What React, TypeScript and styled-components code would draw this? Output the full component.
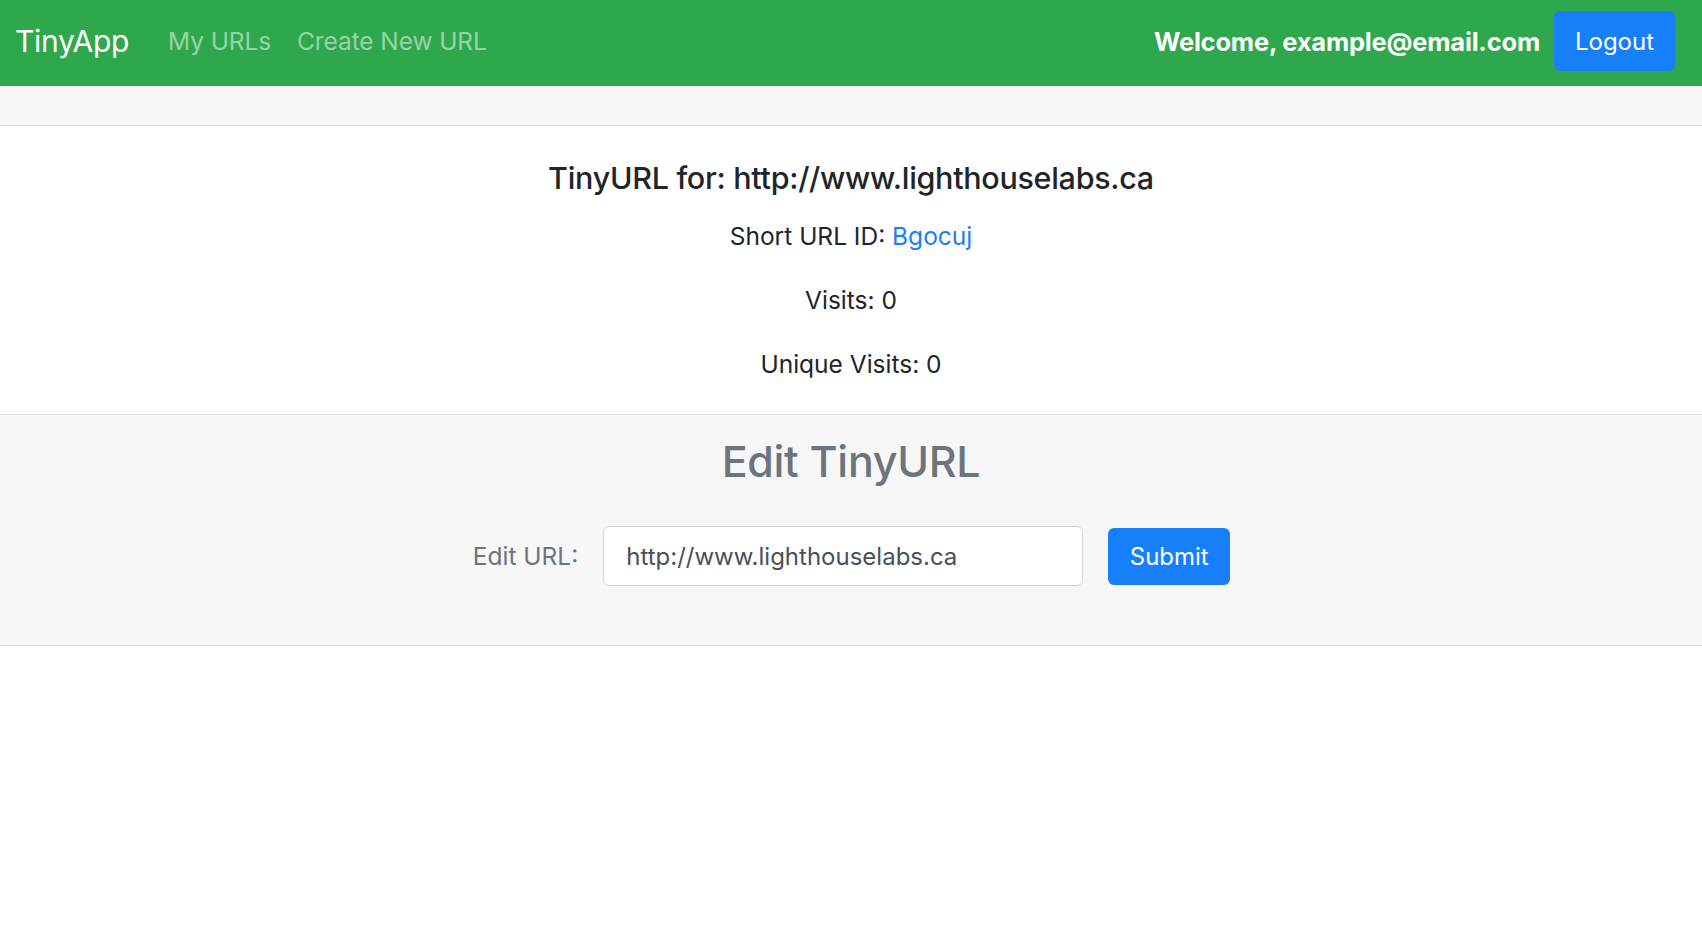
import React from "react";
import styled, { createGlobalStyle } from "styled-components";

const GlobalStyle = createGlobalStyle`
  html, body { margin: 0; padding: 0; background: #ffffff; }
  body {
    font-family: Inter, "Noto Sans", "Liberation Sans", sans-serif;
    color: #212529;
  }
  * { box-sizing: border-box; }
`;

const NavBar = styled.nav`
  display: flex;
  align-items: center;
  height: 86px;
  padding: 0 27px 4px 15px;
  background: #2fa74d;
`;

const Brand = styled.a`
  font-size: 30px;
  color: #ffffff;
  text-decoration: none;
  margin-right: 39px;
  letter-spacing: -0.3px;
`;

const NavLinks = styled.div`
  display: flex;
  gap: 26px;
  flex: 1;
`;

const NavLink = styled.a`
  font-size: 24.5px;
  color: rgba(255, 255, 255, 0.5);
  text-decoration: none;
  letter-spacing: -0.1px;
`;

const Welcome = styled.span`
  font-size: 25.5px;
  font-weight: 700;
  color: #ffffff;
  margin-right: 14px;
  letter-spacing: -0.2px;
`;

const Button = styled.button<{ $w: number; $h: number }>`
  width: ${(p) => p.$w}px;
  height: ${(p) => p.$h}px;
  border: none;
  border-radius: 6px;
  background: #187ffb;
  color: #ffffff;
  font-size: 24px;
  font-family: inherit;
  cursor: pointer;
`;

const Strip = styled.div`
  height: 40px;
  background: #f7f7f7;
  border-bottom: 1px solid #dedede;
`;

const Card = styled.section`
  display: flex;
  flex-direction: column;
  align-items: center;
  padding: 34px 0 32px;
  background: #ffffff;
`;

const Title = styled.h3`
  margin: 0 0 22px;
  font-size: 30.5px;
  line-height: 36px;
  font-weight: 500;
  letter-spacing: -0.3px;
`;

const Info = styled.p`
  margin: 0 0 28px;
  font-size: 24.5px;
  line-height: 36px;
  &:last-child { margin-bottom: 0; }
`;

const IdLink = styled.a`
  color: #187ffb;
  text-decoration: none;
`;

const EditSection = styled.section`
  display: flex;
  flex-direction: column;
  align-items: center;
  padding: 20px 0 59px;
  background: #f7f7f7;
  border-top: 1px solid #dedede;
  border-bottom: 1px solid #dedede;
`;

const EditTitle = styled.h1`
  margin: 0 0 39px;
  font-size: 43px;
  line-height: 52px;
  font-weight: 500;
  color: #6c757d;
  letter-spacing: -0.3px;
`;

const Form = styled.form`
  display: flex;
  align-items: center;
  gap: 25px;
  margin-left: 1px;
`;

const Label = styled.label`
  font-size: 24.5px;
  color: #6c757d;
`;

const Input = styled.input`
  width: 480px;
  height: 60px;
  padding: 0 22px;
  font-size: 24px;
  font-family: inherit;
  color: #495057;
  background: #ffffff;
  border: 1px solid #ced4da;
  border-radius: 6px;
`;

export default function App() {
  return (
    <>
      <GlobalStyle />
      <NavBar>
        <Brand href="#">TinyApp</Brand>
        <NavLinks>
          <NavLink href="#">My URLs</NavLink>
          <NavLink href="#">Create New URL</NavLink>
        </NavLinks>
        <Welcome>Welcome, example@email.com</Welcome>
        <Button $w={121} $h={60}>Logout</Button>
      </NavBar>
      <Strip />
      <Card>
        <Title>TinyURL for: http://www.lighthouselabs.ca</Title>
        <Info>
          Short URL ID: <IdLink href="#">Bgocuj</IdLink>
        </Info>
        <Info>Visits: 0</Info>
        <Info>Unique Visits: 0</Info>
      </Card>
      <EditSection>
        <EditTitle>Edit TinyURL</EditTitle>
        <Form onSubmit={(e) => e.preventDefault()}>
          <Label htmlFor="url">Edit URL:</Label>
          <Input id="url" defaultValue="http://www.lighthouselabs.ca" />
          <Button $w={122} $h={57} type="submit">Submit</Button>
        </Form>
      </EditSection>
    </>
  );
}
